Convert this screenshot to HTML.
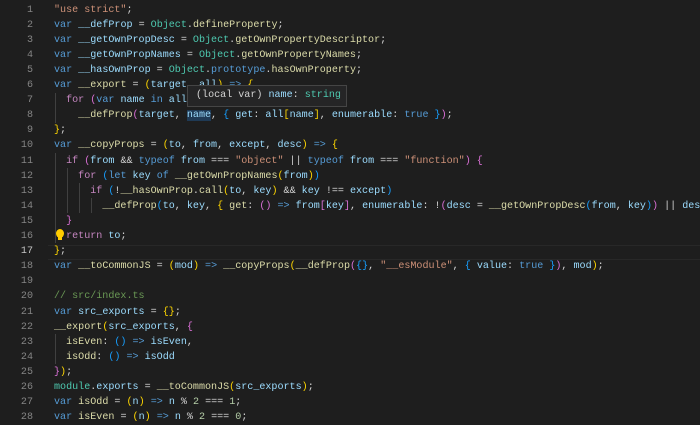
<!DOCTYPE html><html><head><style>
body{margin:0;width:700px;height:423px;background:#1e1e1e;overflow:hidden;font-family:"Liberation Mono",monospace;font-size:10.07px;}
.l{position:absolute;left:0;height:15.1px;line-height:15.1px;white-space:pre;width:700px}
.n{position:absolute;left:0;width:33px;text-align:right;color:#858585}
.c{position:absolute;left:54px;color:#d4d4d4}
.k{color:#569cd6}.v{color:#9cdcfe}.t{color:#4ec9b0}.f{color:#dcdcaa}.s{color:#ce9178}.p{color:#c586c0}.y{color:#ffd700}.m{color:#da70d6}.b{color:#179fff}.g{color:#6a9955}.u{color:#b5cea8}
.gd{position:absolute;width:1px;background:#404040}
</style></head><body>
<div style="position:absolute;left:48px;top:244.5px;width:652px;height:13px;border-top:1px solid #282828;border-bottom:1px solid #282828"></div>
<div class="gd" style="left:55px;top:93px;height:30px"></div>
<div class="gd" style="left:55px;top:153px;height:90px"></div>
<div class="gd" style="left:67px;top:168px;height:45px"></div>
<div class="gd" style="left:79px;top:183px;height:30px"></div>
<div class="gd" style="left:91px;top:198px;height:15px"></div>
<div class="gd" style="left:55px;top:334px;height:30px"></div>
<div id="code"></div>
<div style="position:absolute;left:187px;top:85px;width:160px;height:22px;background:#252526;border:1px solid #454545;box-sizing:border-box;"></div>
<div style="position:absolute;left:196px;top:88px;line-height:15px;white-space:pre;color:#d4d4d4;font-size:10.07px">(local var) <span class="v">name</span>: <span class="t">string</span></div>
<div style="position:absolute;left:56px;top:229px;width:8px;height:9px;border-radius:50%;background:#ffcc00"></div>
<div style="position:absolute;left:58px;top:237px;width:4px;height:3px;background:#ffcc00"></div>
<script>
var L=[
'<span class="s">"use strict"</span>;',
'<span class="k">var</span> <span class="v">__defProp</span> = <span class="t">Object</span>.<span class="f">defineProperty</span>;',
'<span class="k">var</span> <span class="v">__getOwnPropDesc</span> = <span class="t">Object</span>.<span class="f">getOwnPropertyDescriptor</span>;',
'<span class="k">var</span> <span class="v">__getOwnPropNames</span> = <span class="t">Object</span>.<span class="f">getOwnPropertyNames</span>;',
'<span class="k">var</span> <span class="v">__hasOwnProp</span> = <span class="t">Object</span>.<span class="k">prototype</span>.<span class="f">hasOwnProperty</span>;',
'<span class="k">var</span> <span class="f">__export</span> = <span class="y">(</span><span class="v">target</span>, <span class="v">all</span><span class="y">)</span> <span class="k">=&gt;</span> <span class="y">{</span>',
'  <span class="p">for</span> <span class="m">(</span><span class="k">var</span> <span class="v">name</span> <span class="k">in</span> <span class="v">all</span><span class="m">)</span>',
'    <span class="f">__defProp</span><span class="m">(</span><span class="v">target</span>, <span class="v" style="background:#1f3a55">name</span>, <span class="b">{</span> <span class="v">get</span>: <span class="v">all</span><span class="y">[</span><span class="v">name</span><span class="y">]</span>, <span class="v">enumerable</span>: <span class="k">true</span> <span class="b">}</span><span class="m">)</span>;',
'<span class="y">}</span>;',
'<span class="k">var</span> <span class="f">__copyProps</span> = <span class="y">(</span><span class="v">to</span>, <span class="v">from</span>, <span class="v">except</span>, <span class="v">desc</span><span class="y">)</span> <span class="k">=&gt;</span> <span class="y">{</span>',
'  <span class="p">if</span> <span class="m">(</span><span class="v">from</span> &amp;&amp; <span class="k">typeof</span> <span class="v">from</span> === <span class="s">"object"</span> || <span class="k">typeof</span> <span class="v">from</span> === <span class="s">"function"</span><span class="m">)</span> <span class="m">{</span>',
'    <span class="p">for</span> <span class="b">(</span><span class="k">let</span> <span class="v">key</span> <span class="k">of</span> <span class="f">__getOwnPropNames</span><span class="y">(</span><span class="v">from</span><span class="y">)</span><span class="b">)</span>',
'      <span class="p">if</span> <span class="b">(</span>!<span class="f">__hasOwnProp</span>.<span class="f">call</span><span class="y">(</span><span class="v">to</span>, <span class="v">key</span><span class="y">)</span> &amp;&amp; <span class="v">key</span> !== <span class="v">except</span><span class="b">)</span>',
'        <span class="f">__defProp</span><span class="b">(</span><span class="v">to</span>, <span class="v">key</span>, <span class="y">{</span> <span class="f">get</span>: <span class="m">()</span> <span class="k">=&gt;</span> <span class="v">from</span><span class="m">[</span><span class="v">key</span><span class="m">]</span>, <span class="v">enumerable</span>: !<span class="m">(</span><span class="v">desc</span> = <span class="f">__getOwnPropDesc</span><span class="b">(</span><span class="v">from</span>, <span class="v">key</span><span class="b">)</span><span class="m">)</span> || <span class="v">desc</span>',
'  <span class="m">}</span>',
'  <span class="p">return</span> <span class="v">to</span>;',
'<span class="y">}</span>;',
'<span class="k">var</span> <span class="f">__toCommonJS</span> = <span class="y">(</span><span class="v">mod</span><span class="y">)</span> <span class="k">=&gt;</span> <span class="f">__copyProps</span><span class="y">(</span><span class="f">__defProp</span><span class="m">(</span><span class="b">{}</span>, <span class="s">"__esModule"</span>, <span class="b">{</span> <span class="v">value</span>: <span class="k">true</span> <span class="b">}</span><span class="m">)</span>, <span class="v">mod</span><span class="y">)</span>;',
'',
'<span class="g">// src/index.ts</span>',
'<span class="k">var</span> <span class="v">src_exports</span> = <span class="y">{}</span>;',
'<span class="f">__export</span><span class="y">(</span><span class="v">src_exports</span>, <span class="m">{</span>',
'  <span class="f">isEven</span>: <span class="b">()</span> <span class="k">=&gt;</span> <span class="v">isEven</span>,',
'  <span class="f">isOdd</span>: <span class="b">()</span> <span class="k">=&gt;</span> <span class="v">isOdd</span>',
'<span class="m">}</span><span class="y">)</span>;',
'<span class="t">module</span>.<span class="v">exports</span> = <span class="f">__toCommonJS</span><span class="y">(</span><span class="v">src_exports</span><span class="y">)</span>;',
'<span class="k">var</span> <span class="f">isOdd</span> = <span class="y">(</span><span class="v">n</span><span class="y">)</span> <span class="k">=&gt;</span> <span class="v">n</span> % <span class="u">2</span> === <span class="u">1</span>;',
'<span class="k">var</span> <span class="f">isEven</span> = <span class="y">(</span><span class="v">n</span><span class="y">)</span> <span class="k">=&gt;</span> <span class="v">n</span> % <span class="u">2</span> === <span class="u">0</span>;'
];
var h='';for(var i=0;i<L.length;i++){h+='<div class="l" style="top:'+(2.5+i*15.1)+'px"><span class="n"'+(i==16?' style="color:#c6c6c6"':'')+'>'+(i+1)+'</span><span class="c">'+L[i]+'</span></div>';}
document.getElementById('code').innerHTML=h;
</script>
</body></html>
